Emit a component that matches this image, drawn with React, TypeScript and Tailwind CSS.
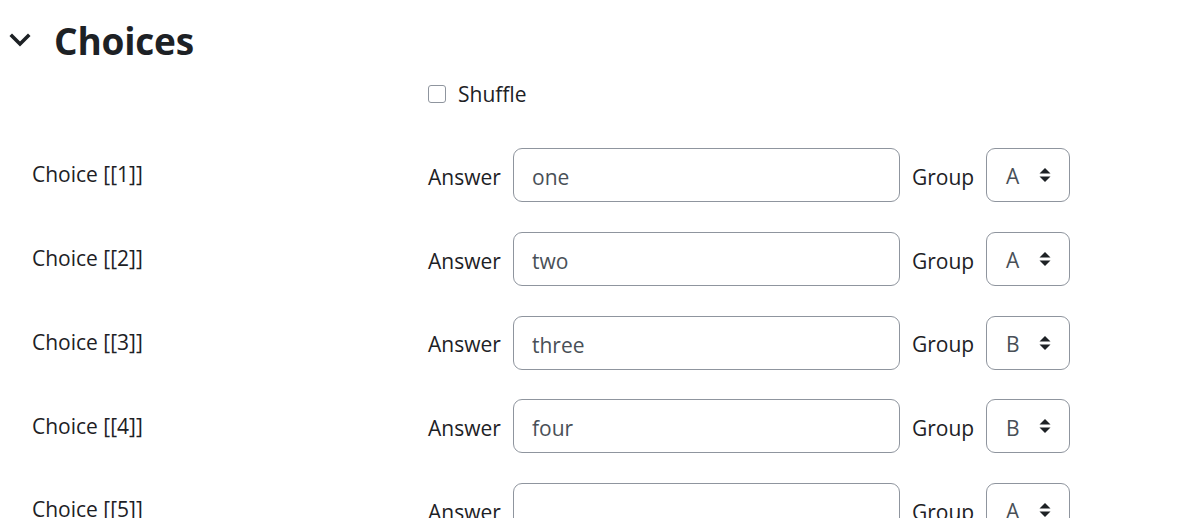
import { useState } from "react";

const choices = [
  { n: 1, answer: "one", group: "A" },
  { n: 2, answer: "two", group: "A" },
  { n: 3, answer: "three", group: "B" },
  { n: 4, answer: "four", group: "B" },
  { n: 5, answer: "", group: "A" },
];

function Chevron() {
  return (
    <svg width="22" height="14" viewBox="0 0 22 14" fill="none">
      <path d="M3 3l8 8 8-8" stroke="#1d2125" strokeWidth="3.6" strokeLinecap="square" />
    </svg>
  );
}

function SortIcon() {
  return (
    <svg width="12" height="16" viewBox="0 0 12 16" fill="#1d2125">
      <path d="M6 1l5.5 5.5H0.5z" />
      <path d="M6 15l5.5-5.5H0.5z" />
    </svg>
  );
}

export default function App() {
  const [rows, setRows] = useState(choices);
  const [shuffle, setShuffle] = useState(false);

  return (
    <div className="bg-white h-[518px] overflow-hidden text-[#1d2125] text-[21px]" style={{ fontFamily: '"Open Sans", "Noto Sans", sans-serif' }}>
      <div className="flex items-center h-[60px] mt-[10px] pl-[9px]">
        <Chevron />
        <h3 className="ml-[23px] text-[37px] font-bold leading-none tracking-[-0.2px]">Choices</h3>
      </div>

      <div className="flex items-center h-[28px] mt-[10px] pl-[428px]">
        <input
          type="checkbox"
          checked={shuffle}
          onChange={(e) => setShuffle(e.target.checked)}
          className="appearance-none w-[18px] h-[18px] border border-[#8f959e] rounded-[3px] bg-white"
        />
        <span className="ml-[12px] mt-[2px]">Shuffle</span>
      </div>

      <div className="mt-[40px] flex flex-col gap-y-[29.75px] pl-[32px]">
        {rows.map((r, i) => (
          <div key={r.n} className="flex items-center h-[54px]">
            <label className="w-[396px]">Choice [[{r.n}]]</label>
            <span className="mt-[5px] w-[73px]">Answer</span>
            <input
              value={r.answer}
              onChange={(e) => setRows(rows.map((x, j) => (j === i ? { ...x, answer: e.target.value } : x)))}
              className="ml-[12px] w-[387px] h-[54px] border border-[#8f959e] rounded-[9px] px-[18px] pt-[4px] text-[#495057] outline-none"
            />
            <span className="ml-[12px] mt-[5px] w-[62px]">Group</span>
            <div className="ml-[12px] w-[84px] h-[54px] border border-[#8f959e] rounded-[9px] flex items-center justify-between pl-[19px] pr-[18px] text-[#495057]">
              <span className="pt-[4px]">{r.group}</span>
              <SortIcon />
            </div>
          </div>
        ))}
      </div>
    </div>
  );
}
